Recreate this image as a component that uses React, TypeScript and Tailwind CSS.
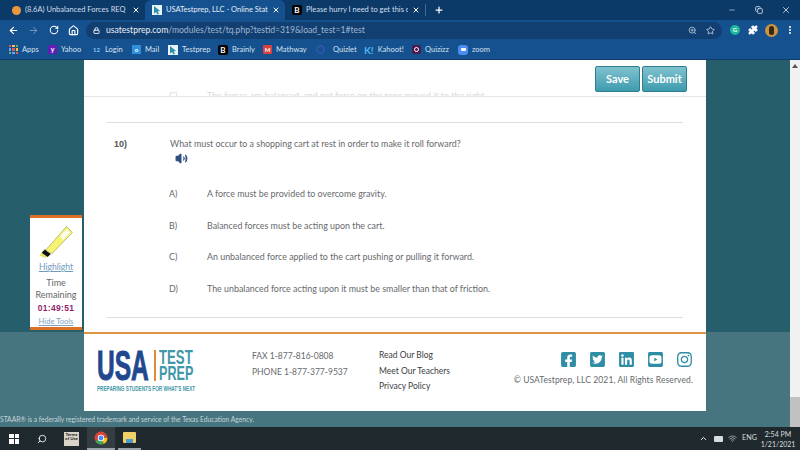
import {
  ArrowLeft,
  ArrowRight,
  ChevronUp,
  Copy,
  Home,
  Lock,
  Minus,
  MoreVertical,
  Plus,
  Puzzle,
  RotateCw,
  Search,
  Star,
  Volume2,
  Wifi,
  X,
  ZoomIn,
} from "lucide-react";
import {
  FaFacebookSquare,
  FaInstagram,
  FaLinkedin,
  FaTwitterSquare,
  FaYoutubeSquare,
} from "react-icons/fa";

const options = [
  { letter: "A)", text: "A force must be provided to overcome gravity.", h: "h-[32px]" },
  { letter: "B)", text: "Balanced forces must be acting upon the cart.", h: "h-[31px]" },
  { letter: "C)", text: "An unbalanced force applied to the cart pushing or pulling it forward.", h: "h-[32px]" },
  { letter: "D)", text: "The unbalanced force acting upon it must be smaller than that of friction.", h: "h-[32px]" },
];

function Cursor() {
  return (
    <span className="w-[10px] h-[10px] bg-[#e8f4f8] flex items-center justify-center shrink-0">
      <svg viewBox="0 0 10 10" className="w-[10px] h-[10px]">
        <path d="M2 1 L8 6 L5.5 6.5 L7 9 L5.5 9.5 L4 7 L2 8.5 Z" fill="#2a8ca8" />
      </svg>
    </span>
  );
}

function BrainlyIcon() {
  return (
    <span className="w-[10px] h-[10px] rounded-[2px] bg-black text-white text-[8px] font-bold leading-[10px] text-center shrink-0">
      B
    </span>
  );
}

function Tab({ icon, label, active }: { icon: React.ReactNode; label: string; active?: boolean }) {
  return (
    <div
      className={`h-[20px] w-[140px] flex items-center gap-[4px] pl-[7px] pr-[5px] rounded-t-[6px] ${
        active ? "bg-[#15518f]" : ""
      }`}
    >
      {icon}
      <span className={`flex-1 overflow-hidden whitespace-nowrap text-[7.5px] ${active ? "text-[#e4edf6]" : "text-[#d3dfec]"}`}>
        {label}
      </span>
      <X className="w-[8px] h-[8px] text-white shrink-0" strokeWidth={3} />
    </div>
  );
}

function Bookmark({ icon, label, w }: { icon: React.ReactNode; label: string; w: string }) {
  return (
    <div className={`flex items-center gap-[4px] text-[7.5px] text-[#d5e1ee] whitespace-nowrap ${w}`}>
      {icon}
      {label}
    </div>
  );
}

function ChromeBar() {
  return (
    <div className="shrink-0">
      <div className="h-[20px] bg-[#0b3a69] flex items-center pl-[5px]">
        <Tab
          icon={<span className="w-[9px] h-[9px] rounded-full bg-[#e8973a] shrink-0" />}
          label="(8.6A) Unbalanced Forces REQ"
        />
        <Tab icon={<Cursor />} label="USATestprep, LLC - Online State-" active />
        <Tab icon={<BrainlyIcon />} label="Please hurry I need to get this do" />
        <span className="w-px h-[12px] bg-[#47698d]" />
        <Plus className="w-[10px] h-[10px] text-white ml-[8px]" strokeWidth={3} />
        <div className="flex-1" />
        <Minus className="w-[8px] h-[8px] text-[#c8d6e4] mr-[19px]" />
        <Copy className="w-[8px] h-[8px] text-[#d8e2ec] mr-[18px]" strokeWidth={2.5} />
        <X className="w-[10px] h-[10px] text-[#d8e2ec] mr-[9px]" />
      </div>
      <div className="h-[20px] bg-[#15518f] flex items-center pl-[8px]">
        <ArrowLeft className="w-[11px] h-[11px] text-white" strokeWidth={2.5} />
        <ArrowRight className="w-[11px] h-[11px] text-[#7d9fc4] ml-[9px]" strokeWidth={2} />
        <RotateCw className="w-[10px] h-[10px] text-white ml-[10px]" strokeWidth={2.5} />
        <Home className="w-[11px] h-[11px] text-white ml-[9px]" strokeWidth={2.5} />
        <div className="w-[636px] h-[17px] ml-[7px] rounded-full bg-[#123f72] flex items-center pl-[7px] pr-[7px] text-[8.6px]">
          <Lock className="w-[7px] h-[7px] text-white mr-[6px]" strokeWidth={3} />
          <span className="text-[#e8eef5]">usatestprep.com</span>
          <span className="text-[#9fb6cf]">/modules/test/tq.php?testid=319&amp;load_test=1#test</span>
          <div className="flex-1" />
          <ZoomIn className="w-[9px] h-[9px] text-[#c5d4e4] mr-[9px]" />
          <Star className="w-[9px] h-[9px] text-[#d8e2ec]" />
        </div>
        <span className="ml-[8px] w-[10px] h-[10px] rounded-full bg-[#1fb79a] text-white text-[6px] font-bold text-center leading-[10px]">
          G
        </span>
        <Puzzle className="w-[10px] h-[10px] ml-[8px] text-white fill-white" />
        <span className="ml-[7px] w-[13px] h-[13px] rounded-full bg-[#c9953e] flex items-center justify-center">
          <span className="w-[5px] h-[9px] rounded-full bg-[#3a2416]" />
        </span>
        <MoreVertical className="w-[10px] h-[10px] ml-[7px] text-white" strokeWidth={3} />
      </div>
      <div className="h-[20px] bg-[#15518f] flex items-center pl-[9px] border-b border-[#0d3d70]">
        <Bookmark
          w="w-[39px]"
          icon={
            <span className="grid grid-cols-3 gap-px w-[9px] h-[9px]">
              <span className="bg-[#e35b4f]" />
              <span className="bg-[#f2c14e]" />
              <span className="bg-[#5fb36a]" />
              <span className="bg-[#6fa8e8]" />
              <span className="bg-[#e35b4f]" />
              <span className="bg-[#f2c14e]" />
              <span className="bg-[#5fb36a]" />
              <span className="bg-[#6fa8e8]" />
              <span className="bg-[#e35b4f]" />
            </span>
          }
          label="Apps"
        />
        <Bookmark
          w="w-[45px]"
          icon={
            <span className="w-[9px] h-[9px] bg-[#5f1fb5] text-white text-[7px] font-bold leading-[9px] text-center">
              y
            </span>
          }
          label="Yahoo"
        />
        <Bookmark
          w="w-[39px]"
          icon={<span className="w-[8px] text-[#7fc4f2] text-[6px] font-bold">12</span>}
          label="Login"
        />
        <Bookmark
          w="w-[36px]"
          icon={
            <span className="w-[9px] h-[9px] bg-[#2f8fdd] text-white text-[6px] font-bold leading-[9px] text-center">
              o
            </span>
          }
          label="Mail"
        />
        <Bookmark w="w-[50px]" icon={<Cursor />} label="Testprep" />
        <Bookmark w="w-[45px]" icon={<BrainlyIcon />} label="Brainly" />
        <Bookmark
          w="w-[53px]"
          icon={
            <span className="w-[9px] h-[9px] rounded-[1px] bg-[#d8413e] text-white text-[6px] font-bold leading-[9px] text-center">
              M
            </span>
          }
          label="Mathway"
        />
        <Bookmark
          w="w-[48px]"
          icon={<span className="w-[9px] h-[9px] mr-[4px] rounded-full border-2 border-[#2f55a8]" />}
          label="Quizlet"
        />
        <Bookmark
          w="w-[48px]"
          icon={<span className="text-[#4cb4ee] text-[10px] font-bold leading-[10px]">K!</span>}
          label="Kahoot!"
        />
        <Bookmark
          w="w-[46px]"
          icon={
            <span className="w-[9px] h-[9px] rounded-[2px] bg-[#4a1c4e] flex items-center justify-center">
              <span className="w-[5px] h-[5px] rounded-full border border-white" />
            </span>
          }
          label="Quizizz"
        />
        <Bookmark
          w="w-[40px]"
          icon={
            <span className="w-[10px] h-[10px] rounded-[3px] bg-[#4a8cf0] flex items-center justify-center">
              <span className="w-[5px] h-[3px] rounded-[1px] bg-white" />
            </span>
          }
          label="zoom"
        />
      </div>
    </div>
  );
}

function Logo() {
  return (
    <div className="w-[100px] shrink-0 font-['Liberation_Sans',sans-serif] font-bold">
      <div className="flex items-start h-[31px]">
        <div className="w-[51px] h-[31px] text-[43px] leading-[31px] text-[#21488f] [-webkit-text-stroke:1px_#21488f] scale-x-[0.57] origin-left whitespace-nowrap">
          USA
        </div>
        <span className="w-[2px] h-[31px] bg-[#e08a3a] ml-[6px]" />
        <div className="ml-[3px] w-[34px] flex flex-col text-[#3f97a8]">
          <span className="h-[15px] text-[20px] leading-[15px] scale-x-[0.66] origin-left whitespace-nowrap">TEST</span>
          <span className="h-[16px] text-[20px] leading-[16px] scale-x-[0.63] origin-left whitespace-nowrap">PREP</span>
        </div>
      </div>
      <div className="mt-[5px] text-[6.5px] leading-[6px] text-[#3f97a8] scale-x-[0.72] origin-left whitespace-nowrap">
        PREPARING STUDENTS FOR WHAT'S NEXT
      </div>
    </div>
  );
}

function ToolPanel() {
  return (
    <div className="absolute left-[30px] top-[155px] w-[52px] h-[115px] bg-white border-y-[3px] border-[#de6f27] flex flex-col items-center">
      <svg viewBox="0 0 52 36" className="w-[52px] h-[36px] mt-[6px] shrink-0">
        <path d="M9.3 31.3 L14 33.7 L17.7 33 L11.7 28.7 Z" fill="#e6e26a" />
        <path d="M11.7 28.7 L15 25.3 L21 29.7 L17.7 33 Z" fill="#111" />
        <path d="M15.7 26 L21.5 30 L42.3 8.7 L36.7 2.3 Z" fill="#f5f36f" stroke="#bdbd7a" strokeWidth="1" />
        <path d="M30 12 L37 5 L40 8.5 L33 16 Z" fill="#fdfdf0" />
      </svg>
      <span className="text-[8.6px] leading-[12px] mt-[1px] underline text-[#6f9bbd]">Highlight</span>
      <span className="text-[9px] leading-[12px] mt-[4px] text-[#666]">Time</span>
      <span className="text-[9px] leading-[12px] text-[#666]">Remaining</span>
      <span className="text-[8.5px] leading-[12px] mt-[1px] font-bold text-[#8e1f6e] tracking-[0.3px] font-['Liberation_Sans',sans-serif]">
        01:49:51
      </span>
      <span className="text-[7.6px] leading-[12px] mt-[1px] underline text-[#7ba3c2]">Hide Tools</span>
    </div>
  );
}

function TestContent() {
  return (
    <div className="flex-1 min-h-0 bg-white flex flex-col text-[#66696c] text-[8.9px]">
      <div className="h-[37px] shrink-0 border-b border-[#e3e5e6] relative overflow-hidden flex justify-end pr-[19px] pt-[6px] gap-[2px]">
        <div className="absolute left-[85px] top-[29px] flex text-[#d8dadb] whitespace-nowrap">
          <span className="w-[38px]">C)</span>
          <span>The forces are balanced, and net force on the rope moved it to the right.</span>
        </div>
        <button className="w-[45px] h-[26px] rounded-[2px] border border-[#2c7f8e] bg-gradient-to-b from-[#7fc2cf] to-[#3c9bae] text-white text-[11px] font-bold">
          Save
        </button>
        <button className="w-[45px] h-[26px] rounded-[2px] border border-[#2c7f8e] bg-gradient-to-b from-[#7fc2cf] to-[#3c9bae] text-white text-[11px] font-bold">
          Submit
        </button>
      </div>
      <div className="mx-[23px] h-[26px] shrink-0 border-b border-[#dcdedf]" />
      <div className="mx-[23px] flex-1 border-b border-[#dcdedf] pt-[14px] flex">
        <div className="w-[63px] shrink-0 pl-[7px] text-[9px] leading-[14px] font-bold text-[#555] font-['Liberation_Sans',sans-serif]">
          10)
        </div>
        <div className="flex-1">
          <div className="leading-[14px] whitespace-nowrap">
            What must occur to a shopping cart at rest in order to make it roll forward?
          </div>
          <Volume2 className="ml-[5px] mt-px w-[13px] h-[13px] text-[#2f4f80] fill-[#2f4f80]" />
          <div className="mt-[22px] flex flex-col">
            {options.map((o) => (
              <div key={o.letter} className={`flex leading-[14px] whitespace-nowrap ${o.h}`}>
                <span className="w-[38px] shrink-0 -ml-px">{o.letter}</span>
                <span>{o.text}</span>
              </div>
            ))}
          </div>
        </div>
      </div>
      <div className="h-[14px] shrink-0" />
    </div>
  );
}

function SiteFooter() {
  return (
    <div className="h-[79px] shrink-0 bg-white border-t-2 border-[#dd953f] flex items-start pl-[13px] pr-[13px] pt-[16px] text-[8.5px] text-[#66696c]">
      <Logo />
      <div className="ml-[55px] w-[127px] shrink-0 leading-[16px] mt-[-2px]">
        <div>FAX 1-877-816-0808</div>
        <div>PHONE 1-877-377-9537</div>
      </div>
      <div className="w-[120px] shrink-0 leading-[15.5px] mt-[-2px] text-[#3a3d40]">
        <div>Read Our Blog</div>
        <div>Meet Our Teachers</div>
        <div>Privacy Policy</div>
      </div>
      <div className="flex-1 flex flex-col items-end mt-[1px]">
        <div className="flex gap-[12px] text-[#2f8ea5] text-[17px]">
          <FaFacebookSquare />
          <FaTwitterSquare />
          <FaLinkedin />
          <FaYoutubeSquare />
          <FaInstagram />
        </div>
        <div className="mt-[6px] whitespace-nowrap tracking-[0.1px]">© USATestprep, LLC 2021, All Rights Reserved.</div>
      </div>
    </div>
  );
}

function Taskbar() {
  return (
    <div className="h-[23px] shrink-0 bg-[#20292e] flex items-center text-[#d8dcde]">
      <div className="ml-[9px] grid grid-cols-2 gap-px w-[10px] h-[10px]">
        <span className="bg-white" />
        <span className="bg-white" />
        <span className="bg-white" />
        <span className="bg-white" />
      </div>
      <Search className="ml-[18px] w-[10px] h-[10px] text-white -scale-x-100" />
      <div className="ml-[10px] h-[23px] w-[29px] flex items-center justify-center">
        <span className="w-[15px] h-[14px] bg-[#d9d4c8] text-[#222] text-[4.5px] font-bold text-center leading-[4.5px] pt-px">
          Terms of Use
        </span>
      </div>
      <div className="h-[23px] w-[28px] ml-[1px] flex items-center justify-center border-b-2 border-[#9aa3a8] bg-[#333d42]">
        <svg viewBox="0 0 24 24" className="w-[14px] h-[14px]">
          <circle cx="12" cy="12" r="11" fill="#d9463c" />
          <path d="M12 12 L2.5 17.5 A11 11 0 0 0 17 21.8 Z" fill="#3aa757" />
          <path d="M12 12 L23 12 A11 11 0 0 1 17 21.8 L12 12 Z" fill="#f5c518" />
          <circle cx="12" cy="12" r="5.5" fill="#fff" />
          <circle cx="12" cy="12" r="4.2" fill="#4a8cf0" />
        </svg>
      </div>
      <div className="h-[23px] w-[23px] ml-[3px] flex items-center justify-center border-b-2 border-[#9aa3a8]">
        <span className="w-[13px] h-[11px] bg-[#f0cf6a] rounded-[1px] flex items-end justify-center">
          <span className="w-[7px] h-[4px] bg-[#4a9fc9]" />
        </span>
      </div>
      <div className="flex-1" />
      <ChevronUp className="w-[9px] h-[9px] text-white" strokeWidth={2.5} />
      <span className="ml-[6px] w-[9px] h-[6px] bg-[#d8dcde] rounded-[1px]" />
      <Wifi className="ml-[5px] w-[9px] h-[9px] text-[#b9bfc2]" />
      <span className="ml-[5px] text-[7.2px] w-[14px] whitespace-nowrap">ENG</span>
      <div className="ml-[6px] w-[32px] mr-[6px] flex flex-col items-center text-[7px] leading-[10px] whitespace-nowrap">
        <span>2:54 PM</span>
        <span>1/21/2021</span>
      </div>
    </div>
  );
}

export default function App() {
  return (
    <div className="w-[800px] h-[450px] overflow-hidden flex flex-col font-['Lato',sans-serif]">
      <ChromeBar />
      <div className="flex-1 min-h-0 flex">
        <div className="w-[790px] flex flex-col relative">
          <div className="h-[272px] shrink-0 bg-[#265f6b] px-[84px] flex flex-col">
            <TestContent />
          </div>
          <div className="flex-1 bg-[#47757f] px-[84px] flex flex-col">
            <SiteFooter />
            <div className="pt-[3px] -ml-[84px] text-[6.7px] text-[#c4d4d8] whitespace-nowrap">
              STAAR® is a federally registered trademark and service of the Texas Education Agency.
            </div>
          </div>
          <ToolPanel />
        </div>
        <div className="w-[10px] bg-[#f1f1f1] flex flex-col items-center">
          <span className="mt-[4px] w-0 h-0 border-x-[3px] border-x-transparent border-b-[4px] border-b-[#555]" />
          <div className="flex-1" />
          <span className="w-full h-[30px] bg-[#c1c1c1]" />
        </div>
      </div>
      <Taskbar />
    </div>
  );
}
